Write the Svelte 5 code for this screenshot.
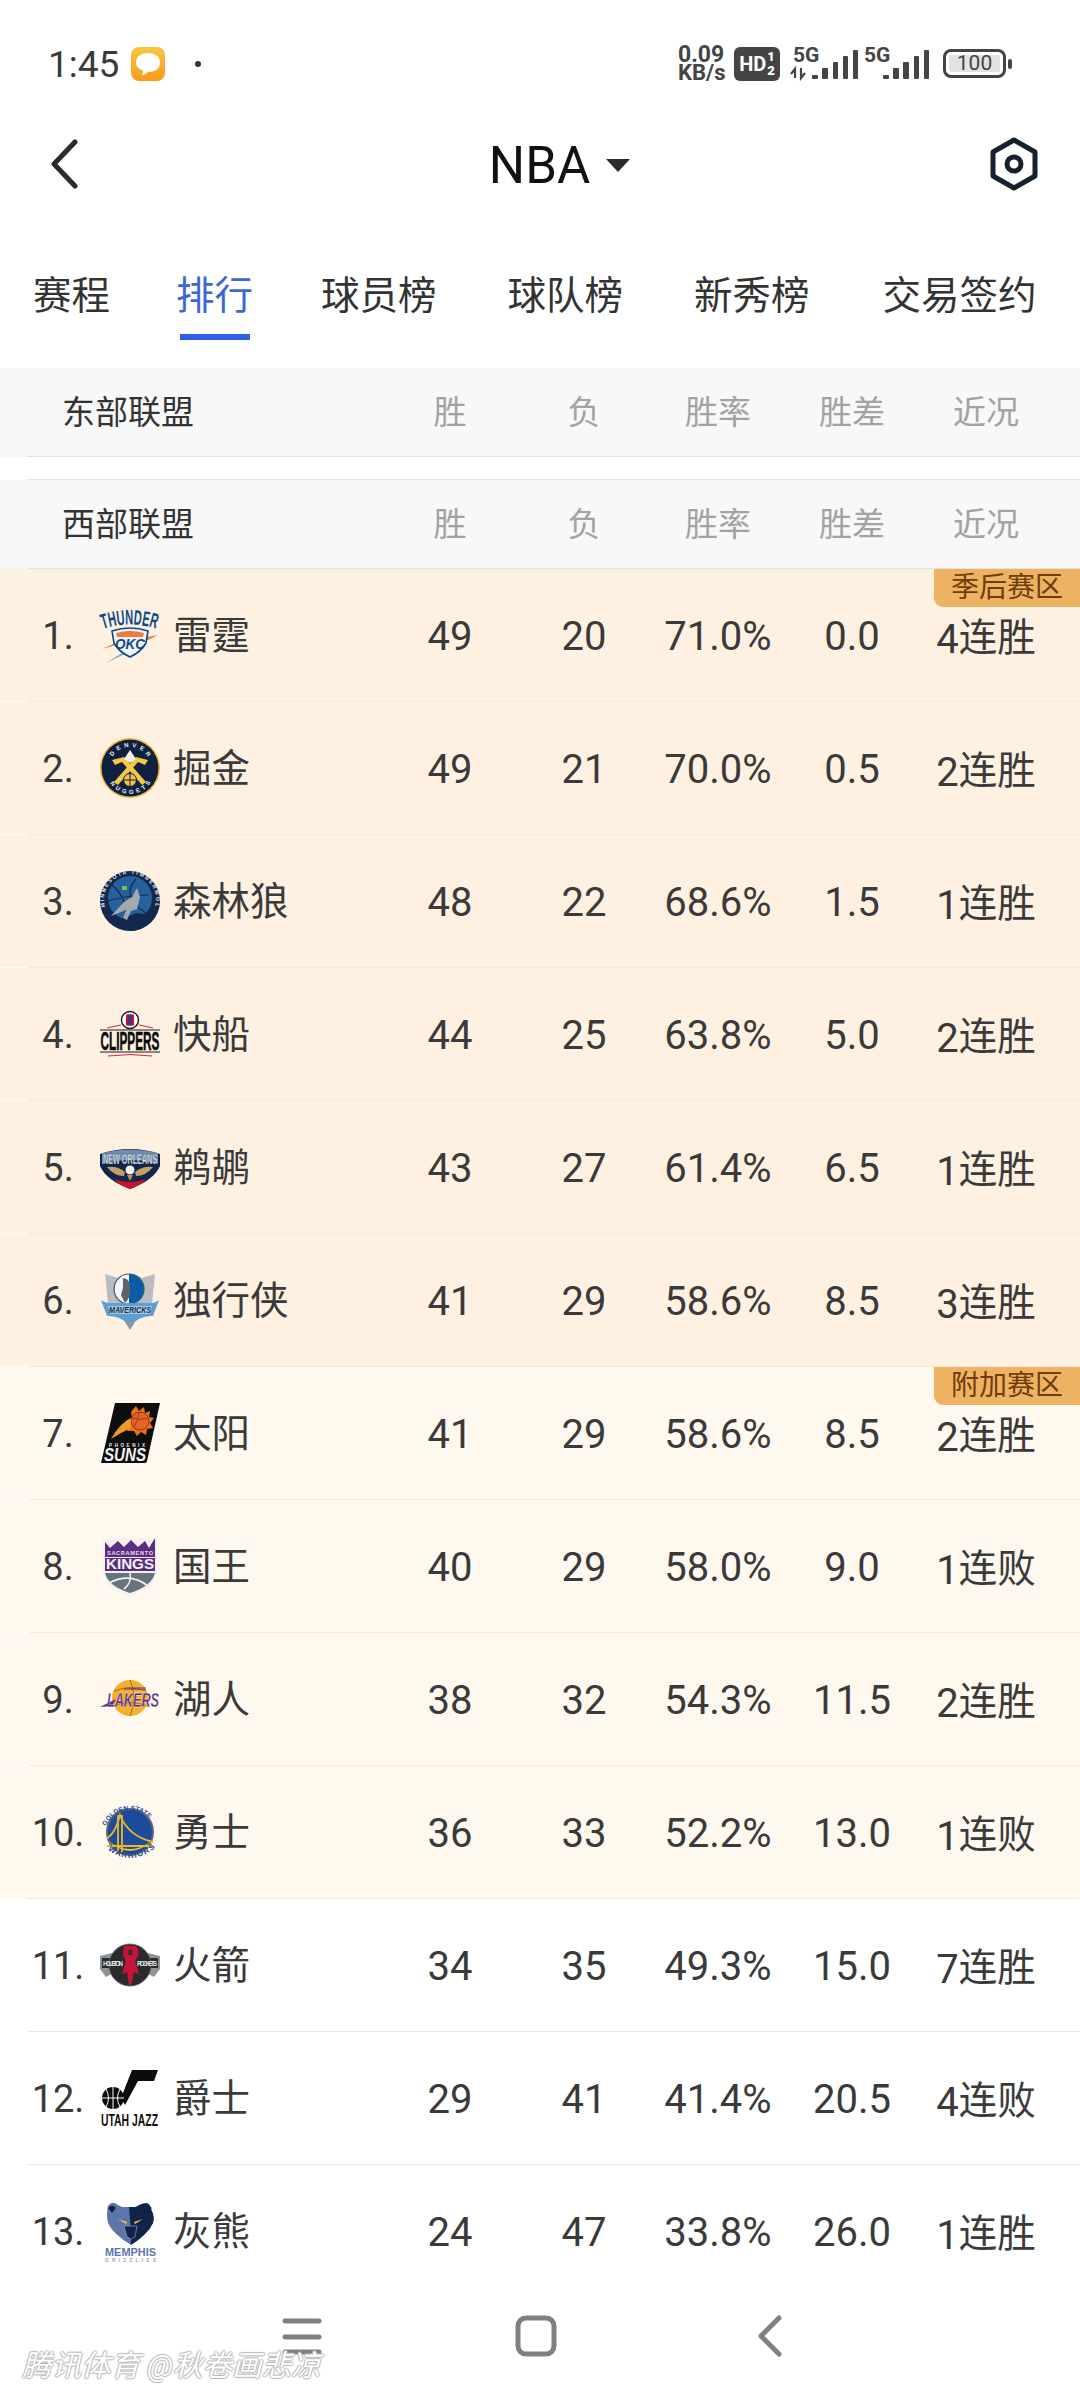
<script>
  const tabs = ['赛程', '排行', '球员榜', '球队榜', '新秀榜', '交易签约'];
  const cols = ['胜', '负', '胜率', '胜差', '近况'];
  const teams = [
    { r: '1.', id: 'okc', n: '雷霆', s: ['49', '20', '71.0%', '0.0'], f: ['4', '连胜'], z: 'po', tag: '季后赛区' },
    { r: '2.', id: 'den', n: '掘金', s: ['49', '21', '70.0%', '0.5'], f: ['2', '连胜'], z: 'po' },
    { r: '3.', id: 'min', n: '森林狼', s: ['48', '22', '68.6%', '1.5'], f: ['1', '连胜'], z: 'po' },
    { r: '4.', id: 'lac', n: '快船', s: ['44', '25', '63.8%', '5.0'], f: ['2', '连胜'], z: 'po' },
    { r: '5.', id: 'nop', n: '鹈鹕', s: ['43', '27', '61.4%', '6.5'], f: ['1', '连胜'], z: 'po' },
    { r: '6.', id: 'dal', n: '独行侠', s: ['41', '29', '58.6%', '8.5'], f: ['3', '连胜'], z: 'po' },
    { r: '7.', id: 'phx', n: '太阳', s: ['41', '29', '58.6%', '8.5'], f: ['2', '连胜'], z: 'pi', tag: '附加赛区' },
    { r: '8.', id: 'sac', n: '国王', s: ['40', '29', '58.0%', '9.0'], f: ['1', '连败'], z: 'pi' },
    { r: '9.', id: 'lal', n: '湖人', s: ['38', '32', '54.3%', '11.5'], f: ['2', '连胜'], z: 'pi' },
    { r: '10.', id: 'gsw', n: '勇士', s: ['36', '33', '52.2%', '13.0'], f: ['1', '连败'], z: 'pi' },
    { r: '11.', id: 'hou', n: '火箭', s: ['34', '35', '49.3%', '15.0'], f: ['7', '连胜'], z: '' },
    { r: '12.', id: 'uta', n: '爵士', s: ['29', '41', '41.4%', '20.5'], f: ['4', '连败'], z: '' },
    { r: '13.', id: 'mem', n: '灰熊', s: ['24', '47', '33.8%', '26.0'], f: ['1', '连胜'], z: '', last: true }
  ];
  const barsA = [[21, 75, 6], [31, 68, 6], [42, 62, 5], [52, 56, 5], [62, 50, 5]];
  const barsB = [[92, 75, 6], [102, 68, 6], [112, 62, 6], [123, 56, 5], [133, 50, 5]];
</script>

{#snippet logo(id)}
  <svg class="logo" viewBox="0 0 60 60" aria-hidden="true">
    {#if id === 'okc'}
      <defs><path id="okcArc" d="M3 24 Q30 15 57 24" /></defs>
      <path d="M2 44 L22 35 L20 39Z" fill="#ef7b3b" />
      <path d="M6 58 L32 42 L27 48Z" fill="#7ea2c2" />
      <path d="M42 33 L58 30 L44 37Z" fill="#ef7b3b" />
      <text class="lt" font-size="21" fill="#0a4a88" font-weight="700"><textPath href="#okcArc" textLength="54" lengthAdjust="spacingAndGlyphs">THUNDER</textPath></text>
      <path d="M12 26 Q30 20 48 26 L46 38 Q41 47 30 52 Q19 47 14 38Z" fill="#f0f3f5" stroke="#0a4a88" stroke-width="1.6" />
      <path d="M16 28 Q30 24 44 28 L43 32 L17 32Z" fill="#ef7b3b" />
      <text class="lt" x="15" y="44" font-size="15" font-weight="700" font-style="italic" fill="#0a4a88" textLength="30" lengthAdjust="spacingAndGlyphs">OKC</text>
    {:else if id === 'den'}
      <defs>
        <path id="denTop" d="M9 30 A21 21 0 0 1 51 30" />
        <path id="denBot" d="M6 32 A24 24 0 0 0 54 32" />
      </defs>
      <circle cx="30" cy="30" r="30" fill="#f5b840" />
      <circle cx="30" cy="30" r="28.5" fill="#10213f" />
      <text class="lt" font-size="6" font-weight="700" fill="#e8edf2"><textPath href="#denTop" startOffset="12" textLength="42">DENVER</textPath></text>
      <text class="lt" font-size="6" font-weight="700" fill="#e8edf2"><textPath href="#denBot" startOffset="14" textLength="48">NUGGETS</textPath></text>
      <path d="M12 22 L24 19 L46 44 L42 47 L22 24 L15 27Z" fill="#f3c84a" />
      <path d="M48 22 L36 19 L14 44 L18 47 L38 24 L45 27Z" fill="#f3c84a" />
      <path d="M30 12 L36 21 L30 25 L24 21Z" fill="#f4efe2" />
      <circle cx="30" cy="42" r="6.5" fill="#f0c14a" stroke="#10213f" />
      <path d="M24 42 H36 M30 36 V48" stroke="#10213f" />
    {:else if id === 'min'}
      <defs><path id="minArc" d="M5 36 A26 26 0 1 1 55 36" /></defs>
      <circle cx="30" cy="30" r="30" fill="#12294d" />
      <circle cx="30" cy="27" r="22" fill="#25629c" />
      <path d="M12 14 Q30 30 24 48 M36 8 Q20 26 46 42 M8 30 Q28 24 48 24" fill="none" stroke="#12294d" stroke-width="1.2" />
      <rect x="22" y="15" width="5" height="4" fill="#7dc04b" />
      <path d="M30 60 Q46 60 54 44 L36 42 L16 50Z" fill="#12294d" />
      <path d="M37 17 L40 26 L37 38 L31 40 L27 49 L23 47 L26 39 L11 45 L24 31 L32 26Z" fill="#a3a9ad" />
      <text class="lt" font-size="5.2" font-weight="700" fill="#e5e9ee"><textPath href="#minArc" textLength="110">MINNESOTA TIMBERWOLVES</textPath></text>
    {:else if id === 'lac'}
      <path d="M7 24 L21 21 M53 24 L39 21" stroke="#c8102e" stroke-width="0.9" />
      <circle cx="30" cy="16" r="8.5" fill="#fff" stroke="#1a1a1a" stroke-width="1.4" />
      <rect x="26" y="10.500" width="8" height="11" fill="#c8102e" />
      <rect x="28.500" y="10.500" width="3" height="11" fill="#1d428a" />
      <rect x="0" y="25.500" width="60" height="1" fill="#1a1a1a" />
      <text class="lt" transform="translate(0.5 46) scale(0.786 1.76)" font-size="15" font-weight="700" fill="#0a0a0a" stroke="#0a0a0a" stroke-width="0.3">CLIPPERS</text>
      <rect x="0" y="47.500" width="60" height="1" fill="#1a1a1a" />
      <path d="M8 52 Q30 49 52 52" fill="none" stroke="#c8102e" stroke-width="0.9" />
    {:else if id === 'nop'}
      <g transform="translate(0 7)">
        <path d="M0 10 Q30 0 60 10 L60 22 Q54 36 30 45 Q6 36 0 22Z" fill="#10264b" />
        <path d="M2 9 Q30 2 58 9 L58 20 Q30 12 2 20Z" fill="#6f8fb0" />
        <text class="lt" transform="translate(3 20) scale(0.85 1.76)" font-size="8.5" font-weight="700" fill="#f2f5f8" stroke="#10264b" stroke-width="0.2">NEW ORLEANS</text>
        <path d="M7 23 Q18 22 25 28 L24 32 Q14 32 7 23Z M53 23 Q42 22 35 28 L36 32 Q46 32 53 23Z" fill="#c4a263" />
        <circle cx="30" cy="26" r="5" fill="#f0f0ee" stroke="#0f2a55" />
        <path d="M27 31 L33 31 L30 37Z" fill="#bf8f4e" />
        <path d="M14 35 Q30 41 46 35 Q41 41 30 45 Q19 41 14 35Z" fill="#c8132d" />
      </g>
    {:else if id === 'dal'}
      <path d="M5 4 L18 8 Q30 0 42 8 L55 4 L52 34 L8 34Z" fill="#b7bdc2" />
      <circle cx="29" cy="19" r="15" fill="#f4f5f6" stroke="#45525e" stroke-width="1.2" />
      <path d="M29 4 A15 15 0 0 1 29 34 Z" fill="#0b5aa5" />
      <path d="M23 8 Q31 9 30 19 Q31 27 25 33 L21 25 L23 18Z" fill="#59636c" />
      <path d="M1 30 Q6 34 12 33 L46 33 Q54 34 59 30 L53 46 Q40 45 30 56 Q20 45 7 46Z" fill="#5f9fcf" />
      <path d="M8 36 H52 L50 44 H10Z" fill="#9fc9e6" />
      <text class="lt" x="9" y="43" font-size="9" font-weight="700" font-style="italic" fill="#1b2f44" textLength="42" lengthAdjust="spacingAndGlyphs">MAVERICKS</text>
      <path d="M25 52 L35 52 L30 60Z" fill="#8d979f" />
    {:else if id === 'phx'}
      <path d="M15 0 H60 L47 58 Q46.500 60 45 60 H1Z" fill="#0e0e0e" />
      <path d="M36 3 L39 8 L44 4 L45 10 L50 8 L49 14 L54 15 L50 20 L53 25 L47 26 L46 32 L41 29 L37 33 L34 28 L27 28 L30 22 L26 18 L32 15 L31 9 Z" fill="#e8711c" />
      <circle cx="40" cy="18" r="9" fill="#e5622a" stroke="#7c2d10" stroke-width="0.8" />
      <path d="M32 15 Q41 18 48 15 M34 24 Q39 16 39 9" fill="none" stroke="#7c2d10" stroke-width="0.7" />
      <path d="M11 36 Q20 20 31 15 L31 25 Q20 30 11 36Z" fill="#f09a1f" />
      <text class="lt" x="9" y="44" font-size="4.500" font-weight="700" fill="#eee" textLength="36">PHOENIX</text>
      <text class="lt" x="4" y="58" font-size="18" font-weight="700" font-style="italic" fill="#f2f2f2" textLength="42" lengthAdjust="spacingAndGlyphs">SUNS</text>
    {:else if id === 'sac'}
      <path d="M3 2 L3 38 Q5 52 30 60 Q55 52 57 38 L57 2Z" fill="#f6f1ee" />
      <path d="M5 6 L10 12 L18 5 L24 11 L31 4 L38 11 L45 5 L49 12 L55 2 L55 21 H5Z" fill="#5a2d81" />
      <text class="lt" x="7" y="19" font-size="5.600" font-weight="700" fill="#e6dfee" textLength="46">SACRAMENTO</text>
      <rect x="5" y="22" width="50" height="13" fill="#5a2d81" />
      <text class="lt" x="6" y="33" font-size="14" font-weight="700" fill="#f4f2f6" textLength="48" lengthAdjust="spacingAndGlyphs">KINGS</text>
      <path d="M5 37 H55 Q52 50 30 57 Q8 50 5 37Z" fill="#66747c" />
      <path d="M9 47 Q30 36 48 50 M30 37 Q32 47 24 53" fill="none" stroke="#f6f1ee" stroke-width="1.600" />
    {:else if id === 'lal'}
      <circle cx="30" cy="29" r="18" fill="#f4b02a" />
      <path d="M14 22 Q30 16 46 22 M13 37 Q30 30 47 37 M30 11 Q38 28 30 47" fill="none" stroke="#8a6015" stroke-width="0.8" />
      <path d="M0 38 L16 30 L12 37Z" fill="#5c2f86" />
      <text class="lt" x="7" y="38" font-size="21" font-weight="700" font-style="italic" fill="#5c2f86" stroke="#fff" stroke-width="0.3" textLength="52" lengthAdjust="spacingAndGlyphs">LAKERS</text>
      <text class="lt" x="24" y="21" font-size="3.600" font-weight="700" fill="#5c2f86" textLength="22">LOS ANGELES</text>
    {:else if id === 'gsw'}
      <defs>
        <path id="gswTop" d="M6 24 A26 26 0 0 1 54 24" />
        <path id="gswBot" d="M3 44 Q30 68 57 44" />
      </defs>
      <circle cx="30" cy="30" r="23" fill="#1d4a9a" stroke="#5b6573" stroke-width="2" />
      <path d="M7 38 Q30 56 53 38 Q30 60 7 38Z" fill="#f3c228" />
      <path d="M18 13 V50 M22 13 V50" stroke="#e9b928" stroke-width="1.800" />
      <path d="M7 36 Q15 32 20 13 Q28 34 53 40 M7 44 H53" fill="none" stroke="#e9b928" stroke-width="1.800" />
      <text class="lt" font-size="6.500" font-weight="700" fill="#1d4a9a"><textPath href="#gswTop" textLength="52">GOLDEN STATE</textPath></text>
      <text class="lt" font-size="8" font-weight="700" fill="#1d4a9a"><textPath href="#gswBot" startOffset="6" textLength="52">WARRIORS</textPath></text>
    {:else if id === 'hou'}
      <path d="M0 21 L12 18 H48 L60 21 V34 L54 42 Q30 28 6 42 L0 34Z" fill="#8d9396" />
      <path d="M2 23 H58 V33 H2Z" fill="#2c2a2b" />
      <circle cx="30" cy="30" r="21" fill="#2c2a2b" stroke="#5d6365" stroke-width="0.8" />
      <text class="lt" x="3" y="30.500" font-size="6.500" font-weight="700" fill="#dfe3e4" textLength="20">HOUSTON</text>
      <text class="lt" x="37" y="30.500" font-size="6.500" font-weight="700" fill="#dfe3e4" textLength="20">ROCKETS</text>
      <path d="M24 11 H36 Q39 14 38 21 L35 26 L39 39 L34 37 L31 50 L29 50 L27 37 L22 39 L26 26 L23 21Z" fill="#c6153a" />
      <path d="M28.500 15 H32.500 V20 H28.500Z" fill="#2c2a2b" />
    {:else if id === 'uta'}
      <path d="M32 2 H58 L54 13 H38 L25 37 L21 30Z" fill="#0c0c0c" />
      <circle cx="13" cy="30" r="11" fill="#0c0c0c" />
      <path d="M2 30 H24 M13 19 V41 M6 21 Q11 30 6 39 M20 21 Q15 30 20 39" stroke="#fff" stroke-width="1" fill="none" />
      <text class="lt" x="1" y="58" font-size="16" font-weight="700" fill="#111" textLength="57" lengthAdjust="spacingAndGlyphs">UTAH JAZZ</text>
    {:else if id === 'mem'}
      <path d="M8 5 Q12 -1 18 4 L22 6 H35 L41 3 Q50 0 51 8 Q55 16 53 22 Q48 33 31 44 Q13 33 8 22 Q6 14 8 5Z" fill="#5d76a9" />
      <path d="M29 6 H36 L42 3 Q50 0 51 8 Q55 16 53 22 Q48 33 31 44 Q31 30 29 6Z" fill="#12234a" />
      <path d="M8 7 Q12 2 16 7 L12 12Z M52 7 Q46 2 43 7 L47 12Z" fill="#12234a" />
      <path d="M18 18 L27 21 L26 23 Z M43 18 L34 21 L35 23Z" fill="#f2c55c" />
      <path d="M24 25 H37 L35 36 L31 38 L27 36Z" fill="#12234a" stroke="#9fb1cf" stroke-width="0.6" />
      <text class="lt" x="5" y="55" font-size="11.500" font-weight="700" fill="#5d76a9" textLength="51" lengthAdjust="spacingAndGlyphs">MEMPHIS</text>
      <text class="lt" x="5" y="60.500" font-size="4.800" font-weight="700" fill="#8d9fc2" textLength="51">GRIZZLIES</text>
    {/if}
  </svg>
{/snippet}

{#snippet head(title, extra)}
  <div class="head {extra}">
    <div class="head-title">{title}</div>
    {#each cols as c}<div class="head-col">{c}</div>{/each}
  </div>
{/snippet}

<div class="page" lang="zh-CN">
  <div class="status">
    <div class="status-left">
      <span class="time">1:45</span>
      <svg class="msg" viewBox="0 0 34 34" aria-hidden="true">
        <defs>
          <linearGradient id="msgBg" x1="0" y1="0" x2="0" y2="1">
            <stop offset="0" stop-color="#fbc544" />
            <stop offset="1" stop-color="#f79a1c" />
          </linearGradient>
        </defs>
        <rect width="34" height="34" rx="8" fill="url(#msgBg)" />
        <path d="M17 6 C25 6 29 10.500 29 15.500 C29 21 25 25 17 25 L11 29 L12 23.500 C7.500 22 5 19 5 15.500 C5 10.500 9 6 17 6Z" fill="#fff" />
      </svg>
      <span class="dot"></span>
    </div>
    <div class="status-right">
      <div class="speed"><span>0.09</span><span>KB/s</span></div>
      <div class="hd"><span class="hd-main">HD</span><span class="hd-sub"><b>1</b><b>2</b></span></div>
      <svg class="signal" viewBox="0 0 138 34" aria-hidden="true">
        <text class="sig" x="2" y="16">5G</text>
        <text class="sig" x="73" y="16">5G</text>
        <path d="M4 32 V23 L0 28 M10 22 V32 L14 27" fill="none" stroke="#444" stroke-width="2.200" />
        {#each barsA as b}<rect x={b[0]} y={b[1] - 46} width={b[2]} height={79 - b[1]} rx="1" fill="#444" />{/each}
        {#each barsB as b}<rect x={b[0]} y={b[1] - 46} width={b[2]} height={79 - b[1]} rx="1" fill="#444" />{/each}
      </svg>
      <div class="battery"><div class="batt-body"><span>100</span></div><div class="batt-nub"></div></div>
    </div>
  </div>

  <div class="nav">
    <svg class="back" viewBox="0 0 28 50" aria-hidden="true">
      <path d="M25 3 L4 25 L25 47" fill="none" stroke="#2b2b2b" stroke-width="5" stroke-linecap="round" stroke-linejoin="round" />
    </svg>
    <div class="title"><span>NBA</span><i class="caret"></i></div>
    <svg class="hex" viewBox="0 0 48 54" aria-hidden="true">
      <path d="M24 3 L45 15 V39 L24 51 L3 39 V15Z" fill="none" stroke="#17202e" stroke-width="5" stroke-linejoin="round" />
      <circle cx="24" cy="27" r="7" fill="none" stroke="#17202e" stroke-width="5" />
    </svg>
  </div>

  <div class="tabs">
    {#each tabs as t, i}
      <div class="tab" class:active={i === 1}><span>{t}</span><i class="ink"></i></div>
    {/each}
  </div>

  {@render head('东部联盟', 'east')}
  <div class="spacer"></div>
  {@render head('西部联盟', 'west')}

  <div class="list">
    {#each teams as t}
      <div class="row {t.z}" class:last={t.last}>
        <div class="rank">{t.r}</div>
        {@render logo(t.id)}
        <div class="name">{t.n}</div>
        {#each t.s as v}<div class="cell">{v}</div>{/each}
        <div class="cell">{t.f[0]}<span class="cjk">{t.f[1]}</span></div>
        {#if t.tag}<div class="tag">{t.tag}</div>{/if}
      </div>
    {/each}
  </div>

  <div class="sysnav">
    <svg viewBox="0 0 60 44" aria-hidden="true">
      <path d="M13 7 H47 M13 23 H47 M13 38 H47" stroke="#808080" stroke-width="5" stroke-linecap="round" />
    </svg>
    <svg viewBox="0 0 60 44" aria-hidden="true">
      <rect x="12" y="4" width="36" height="36" rx="8" fill="none" stroke="#808080" stroke-width="5" />
    </svg>
    <svg viewBox="0 0 60 44" aria-hidden="true">
      <path d="M39 4 L21 22 L39 40" fill="none" stroke="#808080" stroke-width="5" stroke-linecap="round" stroke-linejoin="round" />
    </svg>
  </div>

  <div class="watermark">腾讯体育 @秋卷画悲凉</div>
</div>

<style>
  :global(body) {
    margin: 0;
    background: #fff;
  }
  .page {
    position: relative;
    width: 1080px;
    height: 2400px;
    overflow: hidden;
    background: #fff;
    color: #333;
    font-family: Roboto, "Noto Sans CJK SC", sans-serif;
  }
  .status {
    height: 108px;
    box-sizing: border-box;
    padding: 40px 68px 0 48px;
    display: flex;
    justify-content: space-between;
    align-items: flex-start;
  }
  .status-left {
    display: flex;
    align-items: center;
    height: 48px;
  }
  .time {
    font-size: 37px;
    color: #3a3a3a;
    width: 83px;
  }
  .msg {
    width: 34px;
    height: 34px;
  }
  .dot {
    width: 6px;
    height: 6px;
    margin-left: 30px;
    border-radius: 50%;
    background: #333;
  }
  .status-right {
    display: flex;
    align-items: flex-start;
  }
  .speed {
    display: flex;
    flex-direction: column;
    width: 56px;
    margin-top: 6px;
    font-weight: 700;
    font-size: 22px;
    line-height: 18px;
    color: #444;
  }
  .speed span:first-child {
    font-size: 23px;
  }
  .hd {
    width: 46px;
    height: 34px;
    margin-top: 7px;
    box-sizing: border-box;
    border-radius: 6px;
    background: #444;
    color: #fff;
    display: flex;
    align-items: center;
    justify-content: center;
    font-weight: 700;
  }
  .hd-main {
    font-size: 20px;
  }
  .hd-sub {
    display: flex;
    flex-direction: column;
    margin-left: 1px;
    font-size: 13px;
    line-height: 14px;
  }
  .signal {
    width: 138px;
    height: 34px;
    margin: 6px 0 0 11px;
    overflow: visible;
  }
  .sig {
    font: 700 21px Roboto, sans-serif;
    fill: #444;
  }
  .battery {
    display: flex;
    align-items: center;
    margin: 9px 0 0 14px;
  }
  .batt-body {
    width: 63px;
    height: 29px;
    box-sizing: border-box;
    padding: 3px;
    border: 3px solid #444;
    border-radius: 8px;
    display: flex;
  }
  .batt-body span {
    flex: 1;
    background: #e2e2e2;
    border-radius: 2px;
    font-size: 21px;
    line-height: 17px;
    text-align: center;
    color: #444;
  }
  .batt-nub {
    width: 4px;
    height: 10px;
    margin-left: 2px;
    border-radius: 2px;
    background: #444;
  }
  .nav {
    height: 112px;
    box-sizing: border-box;
    padding: 0 42px 0 50px;
    display: grid;
    grid-template-columns: 1fr auto 1fr;
    align-items: center;
  }
  .back {
    width: 28px;
    height: 50px;
  }
  .hex {
    width: 48px;
    height: 54px;
    justify-self: end;
  }
  .title {
    display: flex;
    align-items: center;
    padding: 2px 0 0 31px;
    font-size: 51px;
    color: #111;
  }
  .caret {
    width: 0;
    height: 0;
    margin-left: 16px;
    border-left: 12.5px solid transparent;
    border-right: 12.5px solid transparent;
    border-top: 13px solid #2a2a2a;
  }
  .tabs {
    height: 148px;
    box-sizing: border-box;
    padding: 52px 0 0 33px;
    display: flex;
    gap: 71px;
    align-items: flex-start;
  }
  .tab {
    display: flex;
    flex-direction: column;
    align-items: center;
    font-size: 38.5px;
    line-height: 48px;
    color: #333;
  }
  .tab:nth-child(1) {
    margin-right: -5px;
  }
  .tab:nth-child(2) {
    margin-right: -3px;
  }
  .tab:nth-child(5) {
    margin-right: 2px;
  }
  .ink {
    width: 70px;
    height: 6px;
    margin-top: 14px;
    background: transparent;
  }
  .tab.active {
    color: #3b66d9;
  }
  .tab.active .ink {
    background: #2f5fe6;
  }
  .head {
    position: relative;
    height: 89px;
    box-sizing: border-box;
    padding-bottom: 6px;
    background: #f8f8f8;
    display: grid;
    grid-template-columns: 383px repeat(5, 134px);
    align-items: center;
  }
  .head::after {
    content: "";
    position: absolute;
    left: 27px;
    right: 0;
    bottom: 0;
    height: 1px;
    background: #e2e2e2;
  }
  .head.west::before {
    content: "";
    position: absolute;
    left: 27px;
    right: 0;
    top: -1px;
    height: 1px;
    background: #e2e2e2;
  }
  .spacer {
    height: 23px;
  }
  .head-title {
    padding-left: 62px;
    font-size: 33px;
    color: #333;
  }
  .head-col {
    text-align: center;
    font-size: 33px;
    color: #a3a3a3;
  }
  .row {
    position: relative;
    height: 133px;
    box-sizing: border-box;
    border-bottom: 1px solid rgba(255, 255, 255, 0.6);
    display: grid;
    grid-template-columns: 100px 60px 223px repeat(5, 134px);
    align-items: center;
    font-size: 38px;
    color: #3a3a3a;
  }
  .row::after {
    content: "";
    position: absolute;
    left: 28px;
    right: 0;
    bottom: -1px;
    height: 1px;
    background: #e6e6e6;
  }
  .row.last::after {
    display: none;
  }
  .po {
    background: #fef1e2;
  }
  .po::after {
    background: #f6ead8;
  }
  .pi {
    background: #fef8ef;
  }
  .pi::after {
    background: #f6eadb;
  }
  .rank {
    padding: 2px 0 0 16px;
    text-align: center;
  }
  .logo {
    width: 60px;
    height: 60px;
    overflow: visible;
    display: block;
  }
  .lt {
    font-family: "Liberation Sans", sans-serif;
  }
  .name {
    padding: 0 0 6px 13px;
    font-size: 38.5px;
  }
  .cell {
    padding-top: 2px;
    text-align: center;
    font-size: 40px;
  }
  .cjk {
    display: inline-block;
    font-size: 38.5px;
    transform: translateY(-2px);
  }
  .tag {
    position: absolute;
    right: 0;
    top: 0;
    width: 146px;
    height: 38px;
    border-bottom-left-radius: 9px;
    background: #eeb263;
    color: #6e3d0a;
    font-size: 28px;
    line-height: 38px;
    text-align: center;
  }
  .sysnav {
    height: 102px;
    box-sizing: border-box;
    padding: 16px 8px 0 0;
    display: flex;
    justify-content: center;
    gap: 174px;
    background: #fff;
  }
  .sysnav svg {
    width: 60px;
    height: 44px;
  }
  .watermark {
    position: absolute;
    left: 22px;
    top: 2346px;
    font-size: 29.5px;
    line-height: 40px;
    font-style: italic;
    white-space: nowrap;
    color: #fff;
    text-shadow: 1px 0 1px #b5b5b5, -1px 0 1px #b5b5b5, 0 1px 1px #b5b5b5, 0 -1px 1px #b5b5b5;
  }
</style>
